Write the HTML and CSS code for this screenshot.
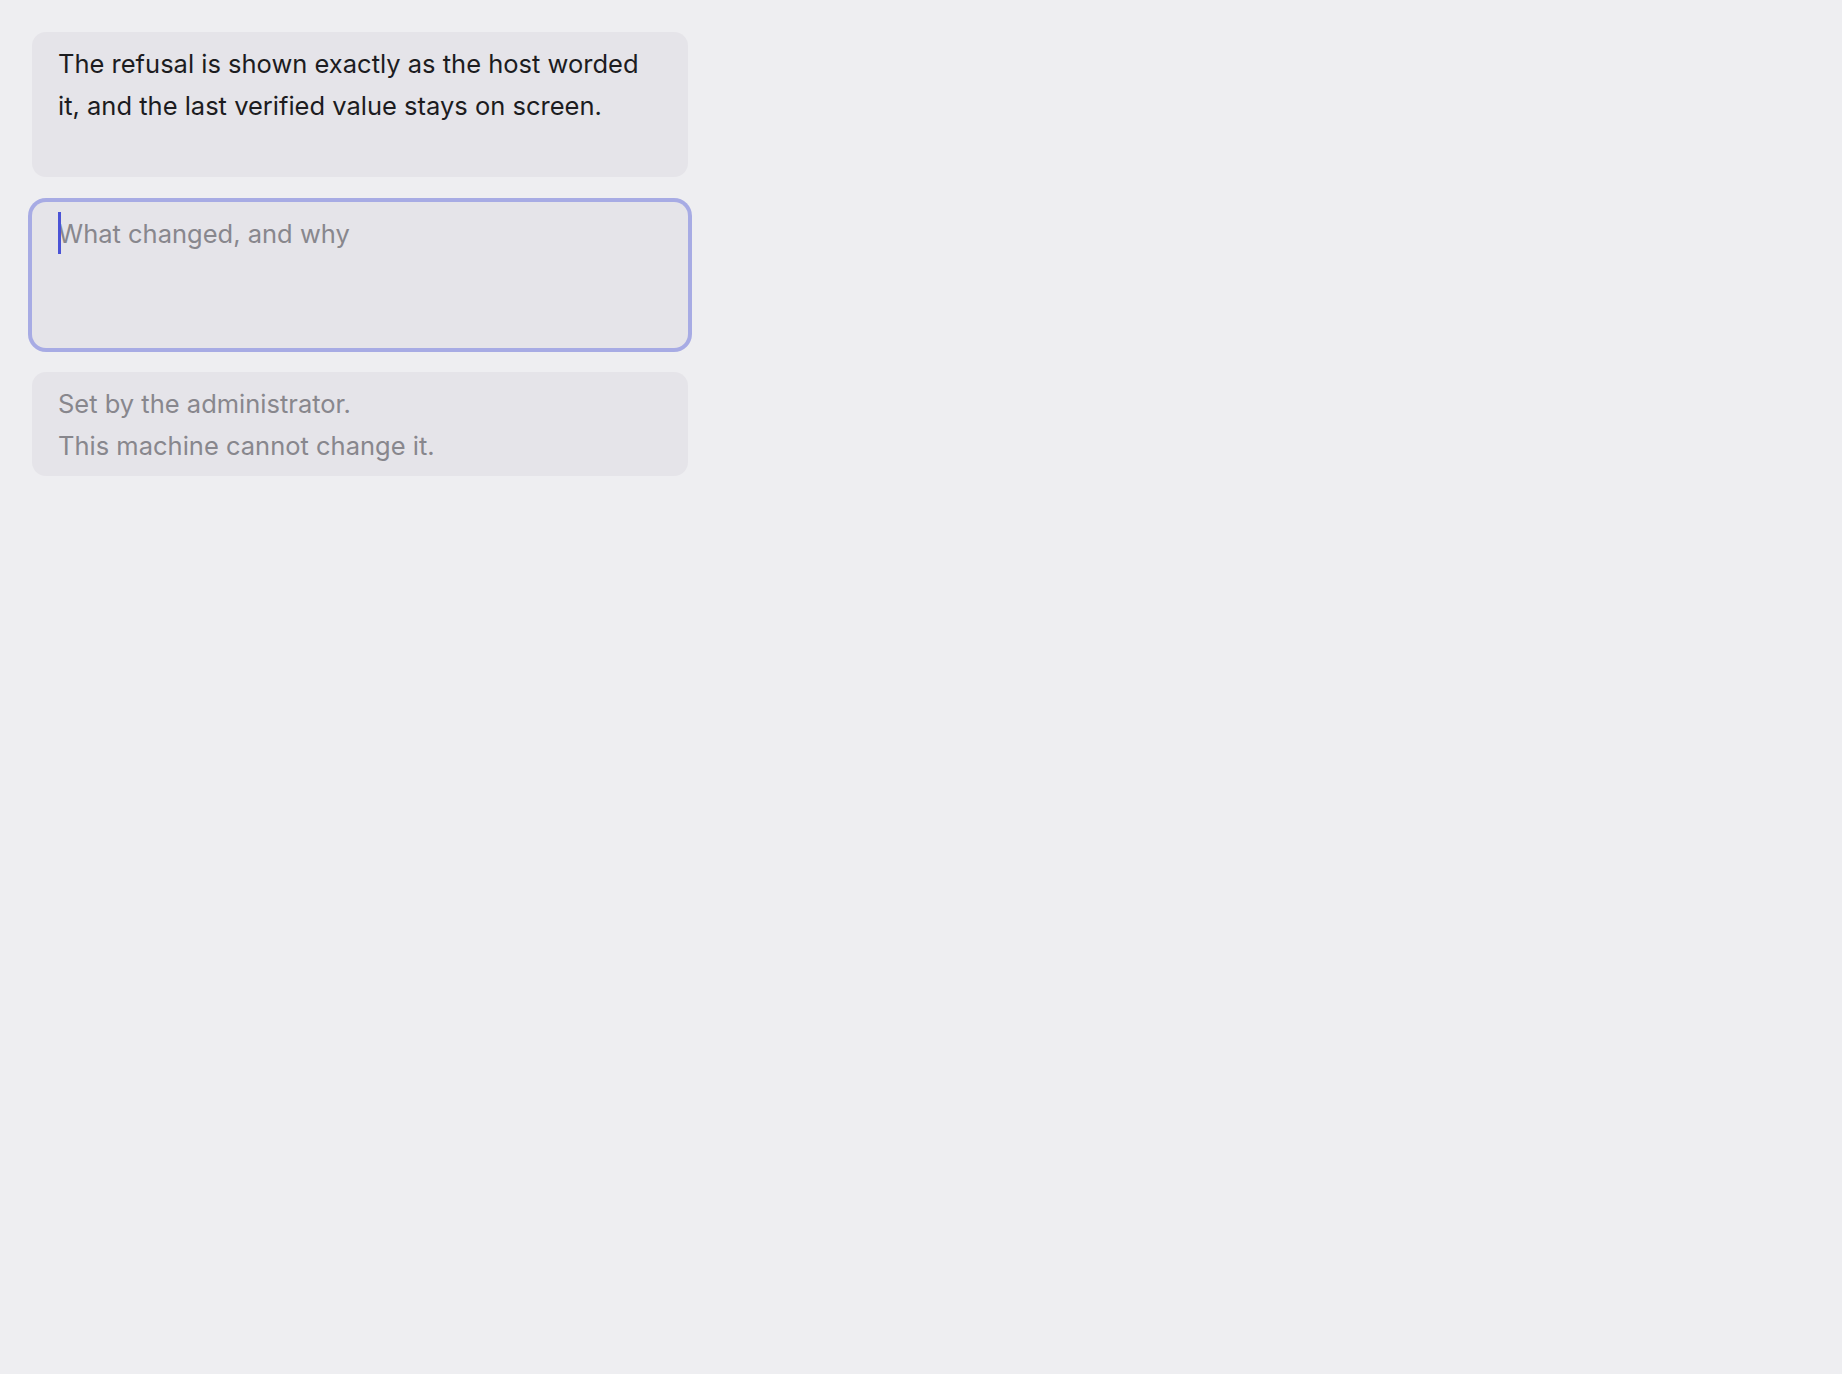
FILE: index.html
```html
<!DOCTYPE html>
<html lang="en">
<head>
<meta charset="utf-8">
<title>Notes</title>
<link rel="stylesheet" href="styles.css">
</head>
<body>
<main class="stack">
  <div class="field field--text">
    <p class="field__body">The refusal is shown exactly as the host worded it, and the last verified value stays on screen.</p>
  </div>
  <div class="field field--input field--focused">
    <span class="caret"></span>
    <p class="field__body field__placeholder">What changed, and why</p>
  </div>
  <div class="field field--locked">
    <p class="field__body field__muted">Set by the administrator.<br>This machine cannot change it.</p>
  </div>
</main>
</body>
</html>
```

FILE: styles.css
```css
html, body {
  margin: 0;
  padding: 0;
  background: #eeeef1;
}

body {
  font-family: Inter, "Noto Sans", "Liberation Sans", sans-serif;
  -webkit-font-smoothing: antialiased;
}

.stack {
  display: flex;
  flex-direction: column;
  gap: 24px;
  width: 656px;
  padding: 32px 0 0 32px;
}

.field {
  position: relative;
  background: #e5e4e9;
  border-radius: 14px;
  padding: 11px 26px 9px 26px;
  box-sizing: border-box;
}

.field--text {
  min-height: 145px;
}

.field--input {
  min-height: 146px;
  margin-top: 1px;
}

.field--focused {
  box-shadow: 0 0 0 4px #a7abe4;
}

.field__body {
  margin: 0;
  font-size: 25.5px;
  line-height: 42px;
  color: #1c1c1f;
}

.field__placeholder,
.field__muted {
  color: #88878d;
}

.caret {
  position: absolute;
  left: 26px;
  top: 10px;
  width: 2.5px;
  height: 42px;
  background: #4b53d6;
}
```
